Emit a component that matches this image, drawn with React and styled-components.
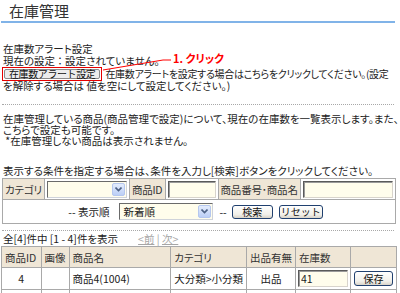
import React from 'react'
import styled, { createGlobalStyle } from 'styled-components'

const GlobalStyle = createGlobalStyle`
  html, body { margin: 0; padding: 0; background: #fff; }
  body {
    font-family: "MS PGothic", "Noto Sans CJK JP", sans-serif;
    font-size: 10.5px;
    color: #222;
    font-feature-settings: "palt";
  }
`

const Page = styled.div`
  width: 400px;
  height: 293px;
  overflow: hidden;
`

const Title = styled.h1`
  box-sizing: border-box;
  height: 23px;
  margin: 0 5px 0 1px;
  padding-left: 8px;
  font-size: 15px;
  font-weight: normal;
  line-height: 21px;
  color: #333;
  border-bottom: 2px solid #80b3e8;
`

const Body = styled.div`
  padding: 0 4px 0 3px;
`

const AlertBlock = styled.div`
  position: relative;
  margin-top: 20px;
`

const Line = styled.div`
  height: ${p => p.h || 12}px;
  line-height: ${p => p.h || 12}px;
  white-space: nowrap;
`

const ButtonRow = styled.div`
  display: flex;
  align-items: center;
  height: 13px;
  white-space: nowrap;
`

const RedBox = styled.span`
  display: inline-flex;
  margin-left: -1px;
  padding: 1px;
  border: 1px solid #e60000;
`

const GreyButton = styled.button`
  height: 10px;
  padding: 0 4px;
  font-family: inherit;
  font-size: 10px;
  line-height: 8px;
  letter-spacing: -0.4px;
  color: #111;
  background: #ececec;
  border: 1px solid #8a8a8a;
  border-radius: 2px;
`

const AfterText = styled.span`
  margin-left: 3px;
  font-size: 10px;
  letter-spacing: -0.3px;
`

const Callout = styled.svg`
  position: absolute;
  left: 0;
  top: 0;
  pointer-events: none;
`

const CalloutLabel = styled.span`
  position: absolute;
  left: 170px;
  top: 9px;
  font-size: 11px;
  line-height: 12px;
  font-weight: bold;
  color: #ff0000;
`

const Dotted = styled.div`
  margin: ${p => p.top}px 0 0 -1px;
  width: 392px;
  border-top: 1px dotted #a8a8a8;
`

const Para = styled.div`
  margin-top: ${p => p.top}px;
  line-height: ${p => p.lh || 11}px;
  white-space: nowrap;
`

const SearchTable = styled.table`
  margin: 1px 0 0 -1px;
  width: 394px;
  border-collapse: collapse;
  border: 1px solid #8e8e8e;
  td {
    padding: 0;
    border: 1px solid #a9a9a9;
    vertical-align: middle;
    white-space: nowrap;
  }
`

const LabelCell = styled.td`
  && { padding: 0 2px; }
  width: ${p => p.w}px;
  height: 20px;
  background: #efe6d6;
  color: #333;
  letter-spacing: -0.2px;
`

const FieldCell = styled.td`
  && { padding: 0 2px; }
  width: ${p => p.w}px;
`

const OrderCell = styled.td`
  height: 23px;
`

const OrderRow = styled.div`
  display: flex;
  align-items: center;
  justify-content: center;
  padding-right: 7px;
`

const Gap = styled.span`
  display: inline-block;
  width: ${p => p.w}px;
`

const SelectWrap = styled.span`
  position: relative;
  display: inline-block;
  width: ${p => p.w}px;
  height: 17px;
`

const Select = styled.select`
  box-sizing: border-box;
  width: 100%;
  height: 100%;
  appearance: none;
  padding: 0 0 0 3px;
  font-family: inherit;
  font-size: 10.5px;
  color: #222;
  background: #fffdec;
  border: 1px solid;
  border-color: #6a6a6a #cfd3da #cfd3da #6a6a6a;
  border-radius: 0;
  outline: none;
`

const ArrowBox = styled.span`
  position: absolute;
  right: 2px;
  top: 2px;
  width: 13px;
  height: 13px;
  box-sizing: border-box;
  display: flex;
  align-items: center;
  justify-content: center;
  background: linear-gradient(#e3ecfd, #bccff6);
  border: 1px solid #b5c7ef;
  border-radius: 2px;
`

const TextInput = styled.input`
  box-sizing: border-box;
  width: ${p => p.w}px;
  height: 17px;
  padding: 0 2px;
  font-family: inherit;
  font-size: 10.5px;
  color: #222;
  background: #fffdec;
  border: 1px solid;
  border-color: #5a5a5a #d8d4cc #d8d4cc #5a5a5a;
  box-shadow: inset 1px 1px 0 #9a9a9a;
  outline: none;
`

const XpButton = styled.button`
  box-sizing: border-box;
  width: ${p => p.w}px;
  height: ${p => p.h || 14}px;
  padding: 0;
  font-family: inherit;
  font-size: 10px;
  line-height: 10px;
  color: #111;
  background: linear-gradient(#ffffff, #f1f0ea 70%, #d9d4c9);
  border: 1px solid #20406f;
  border-radius: 3px;
`

const CountLine = styled.div`
  margin-top: 2px;
  height: 12px;
  line-height: 12px;
  white-space: nowrap;
`

const Pager = styled.span`
  margin-left: 20px;
  color: #a6a6a6;
  a { color: inherit; text-decoration: underline; }
`

const ResultTable = styled.table`
  margin: 1px 0 0 -2px;
  width: 396px;
  border-collapse: collapse;
  th, td {
    padding: 0 3px;
    border: 1px solid #a9a9a9;
    white-space: nowrap;
    vertical-align: middle;
  }
  th {
    height: 20px;
    background: #efe6d6;
    font-weight: normal;
    text-align: left;
    color: #333;
  }
  td { height: 21px; }
`

const Cell = styled.td`
  && { text-align: ${p => p.align || 'left'}; padding: ${p => p.pad || '0 3px'}; }
`

const Chevron = () => (
  <svg width="7" height="5" viewBox="0 0 7 5">
    <path d="M0.5 0.5 L3.5 3.5 L6.5 0.5" fill="none" stroke="#4d6185" strokeWidth="1.6" />
  </svg>
)

const FakeSelect = ({ w, value }) => (
  <SelectWrap w={w}>
    <Select defaultValue={value}>
      <option value="">{value}</option>
    </Select>
    <ArrowBox><Chevron /></ArrowBox>
  </SelectWrap>
)

export default function App() {
  return (
    <Page>
      <GlobalStyle />
      <Title>在庫管理</Title>
      <Body>
        <AlertBlock>
          <Line>在庫数アラート設定</Line>
          <Line>現在の設定 ： 設定されていません。</Line>
          <ButtonRow>
            <RedBox><GreyButton>在庫数アラート設定</GreyButton></RedBox>
            <AfterText>在庫数アラートを設定する場合はこちらをクリックしてください。(設定</AfterText>
          </ButtonRow>
          <Line h={11}>を解除する場合は 値を空にして設定してください。)</Line>
          <Callout width="240" height="40">
            <polyline points="100,27 160,17 168,17" fill="none" stroke="#ff0000" strokeWidth="1" />
          </Callout>
          <CalloutLabel>1. クリック</CalloutLabel>
        </AlertBlock>

        <Dotted top={13} />

        <Para top={8}>
          在庫管理している商品(商品管理で設定)について、現在の在庫数を一覧表示します。また、<br />
          こちらで設定も可能です。<br />
          &nbsp;*在庫管理しない商品は表示されません。
        </Para>

        <Para top={19} lh={12}>
          表示する条件を指定する場合は、条件を入力し[検索]ボタンをクリックしてください。
        </Para>

        <SearchTable>
          <tbody>
            <tr>
              <LabelCell w={36}>カテゴリ</LabelCell>
              <FieldCell w={80}><FakeSelect w={80} value="" /></FieldCell>
              <LabelCell w={32}>商品ID</LabelCell>
              <FieldCell w={48}><TextInput w={48} /></FieldCell>
              <LabelCell w={80}>商品番号･商品名</LabelCell>
              <FieldCell><TextInput w={90} /></FieldCell>
            </tr>
            <tr>
              <OrderCell colSpan={6}>
                <OrderRow>
                  <span>-- 表示順</span>
                  <Gap w={10} />
                  <FakeSelect w={94} value="新着順" />
                  <Gap w={6} />
                  <span>--</span>
                  <Gap w={5} />
                  <XpButton w={41}>検索</XpButton>
                  <Gap w={6} />
                  <XpButton w={44}>リセット</XpButton>
                </OrderRow>
              </OrderCell>
            </tr>
          </tbody>
        </SearchTable>

        <Dotted top={6} />

        <CountLine>
          全[4]件中 [1 - 4]件を表示
          <Pager><a>&lt;前</a> | <a>次&gt;</a></Pager>
        </CountLine>

        <ResultTable>
          <thead>
            <tr>
              <th style={{ width: 33 }}>商品ID</th>
              <th style={{ width: 16 }}>画像</th>
              <th style={{ width: 109 }}>商品名</th>
              <th style={{ width: 66 }}>カテゴリ</th>
              <th style={{ width: 41 }}>出品有無</th>
              <th style={{ width: 48 }}>在庫数</th>
              <th></th>
            </tr>
          </thead>
          <tbody>
            <tr>
              <Cell align="center">4</Cell>
              <Cell></Cell>
              <Cell>商品4(1004)</Cell>
              <Cell>大分類&gt;小分類</Cell>
              <Cell align="center">出品</Cell>
              <Cell pad="0 2px"><TextInput w={50} defaultValue="41" /></Cell>
              <Cell align="center"><XpButton w={39} h={15}>保存</XpButton></Cell>
            </tr>
            <tr>
              <Cell></Cell><Cell></Cell><Cell></Cell><Cell></Cell><Cell></Cell><Cell></Cell><Cell></Cell>
            </tr>
          </tbody>
        </ResultTable>
      </Body>
    </Page>
  )
}
